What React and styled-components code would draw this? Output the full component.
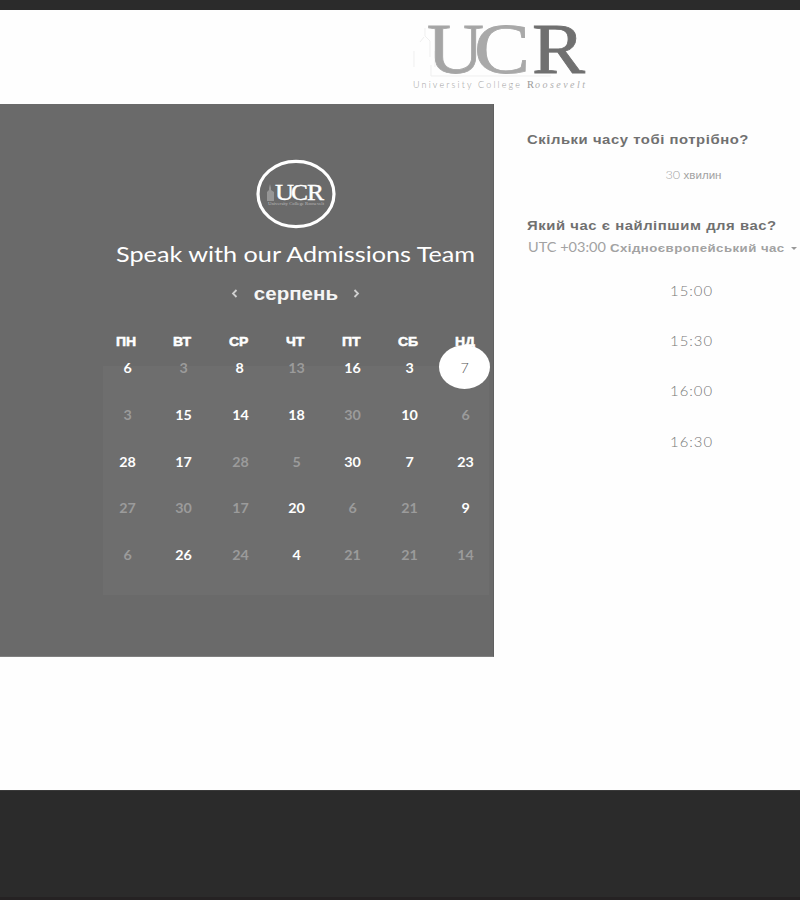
import React from "react";
import styled, { createGlobalStyle } from "styled-components";

const GlobalStyle = createGlobalStyle`
  * { box-sizing: border-box; }
  body { margin: 0; background: #fefefe; font-family: Lato, "Liberation Sans", sans-serif; }
`;

const Page = styled.div`
  display: flex;
  flex-direction: column;
  width: 800px;
  height: 900px;
  overflow: hidden;
`;

const TopBar = styled.div`
  flex: none;
  height: 10px;
  background: #2b2b2b;
`;

const Header = styled.header`
  flex: none;
  height: 94px;
  padding-left: 400px;
`;

const Main = styled.main`
  display: flex;
  flex: 1;
`;

const Footer = styled.footer`
  flex: none;
  height: 110px;
  background: #2b2b2b;
  border-top: 1px solid #3a3a3a;
  border-bottom: 3px solid #252223;
`;

const CalendarPanel = styled.section`
  display: flex;
  flex: none;
  flex-direction: column;
  align-items: center;
  width: 494px;
  height: 553px;
  padding: 55px 0 0 98px;
  background: #6a6a6a;
  border-right: 1px solid #606060;
  border-bottom: 1px solid #808080;
`;

const Stretch = styled.span`
  display: inline-block;
  white-space: nowrap;
  transform: scaleX(${(p) => p.$x || 1.2});
  transform-origin: ${(p) => p.$origin || "center"};
`;

const Title = styled.h1`
  margin: 7px 0 0;
  height: 36px;
  font-size: 21px;
  line-height: 36px;
  font-weight: 400;
  color: #fff;
`;

const MonthNav = styled.div`
  display: flex;
  align-items: center;
  justify-content: center;
  gap: 16px;
  height: 30px;
  margin-top: 6px;
`;

const MonthName = styled.div`
  width: 83px;
  padding-top: 2px;
  text-align: center;
  font: 700 18px/28px "Liberation Sans", sans-serif;
  color: #f5f5f5;
`;

const Arrow = styled.svg`
  width: 7px;
  height: 9px;
  fill: none;
  stroke: #d0d0d0;
  stroke-width: 1.8;
`;

const Weekdays = styled.div`
  display: grid;
  grid-template-columns: repeat(7, 56.4px);
  width: 395px;
  margin-top: 24px;
  height: 34px;
`;

const Weekday = styled.div`
  text-align: center;
  font: 700 12.5px/20px "Liberation Sans", sans-serif;
  color: #fff;
  -webkit-text-stroke: 0.5px #fff;
`;

const Days = styled.div`
  display: grid;
  grid-template-columns: repeat(7, 56.4px);
  grid-auto-rows: 46.8px;
  justify-content: center;
  width: 386px;
  height: 229px;
  background: #6e6e6e;
`;

const Day = styled.div`
  position: relative;
  height: 4px;
  padding-left: 2px;
  text-align: center;
  font-size: 13px;
  line-height: 4px;
  font-weight: 700;
  color: ${(p) => (p.$open ? "#fff" : "#9b9b9b")};
`;

const SelectedDay = styled(Day)`
  &::before {
    content: "";
    position: absolute;
    left: 3px;
    top: -21px;
    width: 51px;
    height: 44px;
    border-radius: 50%;
    background: #fff;
  }
  padding-left: 0;
  font-weight: 300;
  color: #555;
`;

const Booking = styled.aside`
  display: flex;
  flex-direction: column;
  flex: 1;
  padding: 26px 0 0 33px;
`;

const Question = styled.h2`
  margin: 0;
  height: 20px;
  font: 700 13.5px/20px "Liberation Sans", sans-serif;
  letter-spacing: 0.5px;
  color: #707070;
`;

const Duration = styled.div`
  margin: 15px 0 31px;
  width: 332px;
  height: 20px;
  text-align: center;
  font: 400 10.5px/20px "Liberation Sans", sans-serif;
  color: #a2a2a2;
`;

const Thin = styled.span`
  font-family: Lato, sans-serif;
  font-weight: 300;
  font-size: 11.5px;
`;

const Timezone = styled.div`
  display: flex;
  align-items: center;
  height: 20px;
  margin-top: 2px;
  color: #a2a2a2;
`;

const ZoneOffset = styled.div`
  width: 83px;
  padding-left: 1px;
  font: 400 12.5px/20px Lato, sans-serif;
`;

const ZoneName = styled.div`
  width: 181px;
  font: 700 11.5px/20px "Liberation Sans", sans-serif;
  letter-spacing: 0.4px;
`;

const Caret = styled.svg`
  width: 6px;
  height: 3px;
  fill: #999;
`;

const Slots = styled.div`
  display: grid;
  grid-auto-rows: 50.2px;
  width: 330px;
  margin-top: 8px;
`;

const Slot = styled.div`
  display: flex;
  align-items: center;
  justify-content: center;
  font-size: 13.5px;
  font-weight: 300;
  letter-spacing: 0.9px;
  color: #777;
`;

const Logo = styled.svg`
  display: block;
  overflow: visible;
  font-family: "Liberation Serif", serif;
`;

const weekdays = ["ПН", "ВТ", "СР", "ЧТ", "ПТ", "СБ", "НД"];
const days = [
  [6, 1], [3, 0], [8, 1], [13, 0], [16, 1], [3, 1], [7, 2],
  [3, 0], [15, 1], [14, 1], [18, 1], [30, 0], [10, 1], [6, 0],
  [28, 1], [17, 1], [28, 0], [5, 0], [30, 1], [7, 1], [23, 1],
  [27, 0], [30, 0], [17, 0], [20, 1], [6, 0], [21, 0], [9, 1],
  [6, 0], [26, 1], [24, 0], [4, 1], [21, 0], [21, 0], [14, 0],
];
const slots = ["15:00", "15:30", "16:00", "16:30"];

function HeaderLogo() {
  return (
    <Logo width="200" height="90" viewBox="0 0 200 90">
      <path d="M25 18v8l5 5v16M20 32l4-5M14 41v16M35 41v16M31 55v11h120" fill="none" stroke="#efefef" />
      <g fontSize="72" stroke="#a8a8a8" strokeWidth="0.8">
        <text x="27" y="62.5" fill="#a5a5a5" textLength="57" lengthAdjust="spacingAndGlyphs">U</text>
        <text x="74" y="62.5" fill="#a9a9a9" textLength="56" lengthAdjust="spacingAndGlyphs">C</text>
        <text x="132" y="62.5" fill="#707070" stroke="#707070" textLength="53" lengthAdjust="spacingAndGlyphs">R</text>
      </g>
      <text x="13" y="77.5" fontFamily="Lato, sans-serif" fontWeight="300" fontSize="9" fill="#a0a0a0" textLength="107">University College</text>
      <text x="127" y="78" fontSize="10.5" fill="#999">R</text>
      <text x="135" y="78" fontSize="10" fontStyle="italic" fill="#b0b0b0" textLength="50">oosevelt</text>
    </Logo>
  );
}

function RoundLogo() {
  return (
    <Logo width="80" height="70" viewBox="0 0 80 70">
      <ellipse cx="40" cy="35" rx="38" ry="32.7" fill="none" stroke="#fff" strokeWidth="3.2" />
      <path d="M11 42V33l2-2V29l1-4 1 4v2l3 2v9z" fill="#969696" />
      <g fontSize="23" fill="#fff" stroke="#fff" strokeWidth="0.4">
        <text x="19" y="41" textLength="19" lengthAdjust="spacingAndGlyphs">U</text>
        <text x="35" y="41" textLength="17" lengthAdjust="spacingAndGlyphs">C</text>
        <text x="51" y="41" textLength="17" lengthAdjust="spacingAndGlyphs">R</text>
      </g>
      <text x="12" y="46" fontSize="4.5" fill="#bbb" textLength="56" lengthAdjust="spacingAndGlyphs">University College Roosevelt</text>
    </Logo>
  );
}

export default function App() {
  return (
    <Page>
      <GlobalStyle />
      <TopBar />
      <Header><HeaderLogo /></Header>
      <Main>
        <CalendarPanel>
          <RoundLogo />
          <Title><Stretch $x={1.2}>Speak with our Admissions Team</Stretch></Title>
          <MonthNav>
            <Arrow viewBox="0 0 7 9"><path d="M5.5 1L2 4.5L5.5 8" /></Arrow>
            <MonthName><Stretch $x={1.14}>серпень</Stretch></MonthName>
            <Arrow viewBox="0 0 7 9"><path d="M1.5 1L5 4.5L1.5 8" /></Arrow>
          </MonthNav>
          <Weekdays>
            {weekdays.map((d) => <Weekday key={d}><Stretch $x={1.12}>{d}</Stretch></Weekday>)}
          </Weekdays>
          <Days>
            {days.map(([n, state], i) => {
              const Cell = state === 2 ? SelectedDay : Day;
              return <Cell key={i} $open={state === 1}><Stretch $x={1.1}>{n}</Stretch></Cell>;
            })}
          </Days>
        </CalendarPanel>
        <Booking>
          <Question><Stretch $x={1.1} $origin="left">Скільки часу тобі потрібно?</Stretch></Question>
          <Duration><Stretch $x={1.1}><Thin>30 </Thin>хвилин</Stretch></Duration>
          <Question><Stretch $x={1.1} $origin="left">Який час є найліпшим для вас?</Stretch></Question>
          <Timezone>
            <ZoneOffset><Stretch $x={1.16} $origin="left">UTC +03:00</Stretch></ZoneOffset>
            <ZoneName><Stretch $x={1.15} $origin="left">Східноєвропейський час</Stretch></ZoneName>
            <Caret viewBox="0 0 6 3"><path d="M0 0h6L3 3z" /></Caret>
          </Timezone>
          <Slots>
            {slots.map((s) => <Slot key={s}><Stretch $x={1.1}>{s}</Stretch></Slot>)}
          </Slots>
        </Booking>
      </Main>
      <Footer />
    </Page>
  );
}
